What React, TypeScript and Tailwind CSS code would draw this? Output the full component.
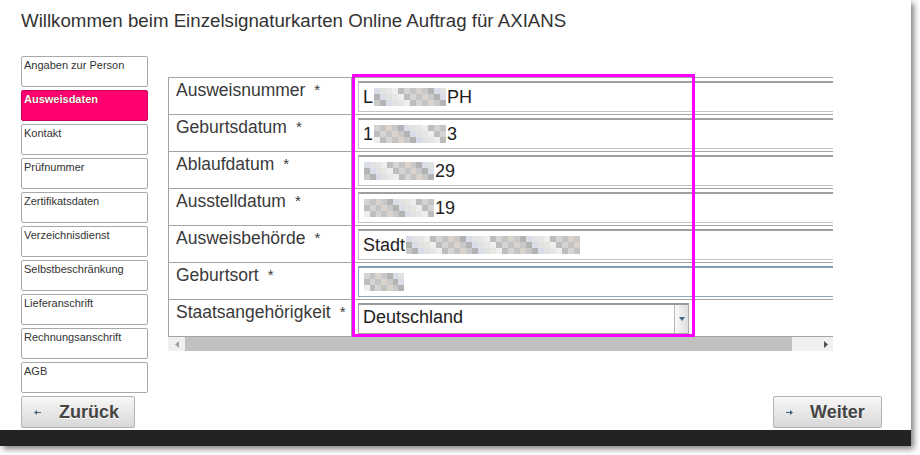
import React from 'react'

const FONT = { fontFamily: '"Liberation Sans", Arial, sans-serif' }

const NAV = [
  'Angaben zur Person', 'Ausweisdaten', 'Kontakt', 'Prüfnummer', 'Zertifikatsdaten',
  'Verzeichnisdienst', 'Selbstbeschränkung', 'Lieferanschrift', 'Rechnungsanschrift', 'AGB'
]

const GRAYS = ['#d4d4d4', '#c9c9c9', '#e2e2e2', '#bdbdbd', '#dad3cb', '#d9dde8', '#eeeeee', '#c4c4c4', '#b3b3b3', '#e8e6e3']

// verpixelter Bereich (geschwärzte Daten im Original)
function Pix({ w, seed = 1 }: { w: number; seed?: number }) {
  const cols = Math.round(w / 6)
  return (
    <span className="inline-flex align-middle mx-[1px]" style={{ width: w }}>
      {Array.from({ length: cols }).map((_, c) => (
        <span key={c} className="flex flex-col w-[6px]">
          {[0, 1, 2].map(r => (
            <span key={r} className="h-[6px]" style={{ background: GRAYS[(c * 7 + r * 3 + seed * 5) % GRAYS.length] }} />
          ))}
        </span>
      ))}
    </span>
  )
}

const ROWS: { label: string; value: React.ReactNode; focus?: boolean; select?: boolean }[] = [
  { label: 'Ausweisnummer', value: <>L<Pix w={72} seed={1} />PH</> },
  { label: 'Geburtsdatum', value: <>1<Pix w={72} seed={2} />3</> },
  { label: 'Ablaufdatum', value: <><Pix w={70} seed={3} />29</> },
  { label: 'Ausstelldatum', value: <><Pix w={70} seed={4} />19</> },
  { label: 'Ausweisbehörde', value: <>Stadt <Pix w={174} seed={5} /></> },
  { label: 'Geburtsort', value: <><Pix w={40} seed={6} /></>, focus: true },
  { label: 'Staatsangehörigkeit', value: 'Deutschland', select: true },
]

function Arrow({ dir }: { dir: 'l' | 'r' }) {
  return (
    <svg width="7" height="5" viewBox="0 0 7 5" className="shrink-0">
      {dir === 'l'
        ? <path d="M0 2.5 L3 0 V2 H7 V3 H3 V5 Z" fill="#4a6b80" />
        : <path d="M7 2.5 L4 0 V2 H0 V3 H4 V5 Z" fill="#36607a" />}
    </svg>
  )
}

export default function App() {
  return (
    <div className="w-[920px] h-[455px] bg-white overflow-hidden" style={FONT}>
      <div className="w-[911px] h-[446px] bg-white flex flex-col shadow-[3px_3px_6px_rgba(0,0,0,0.5)]">
        <div className="h-[56px] pl-[21px] pt-[10px] text-[18.7px] leading-[22px] text-[#333] whitespace-nowrap">
          Willkommen beim Einzelsignaturkarten Online Auftrag für AXIANS
        </div>

        <div className="flex">
          <div className="ml-[21px] w-[127px] flex flex-col gap-[3px]">
            {NAV.map(n => (
              <div key={n}
                className={`h-[31px] rounded-[2px] border text-[11px] leading-[14px] px-[2px] pt-[1px] ${n === 'Ausweisdaten' ? 'bg-[#ff0070] border-[#c8005a] text-white font-bold [text-shadow:0_0_1px_#600]' : 'border-[#a8a8a8] text-[#333]'}`}>
                {n}
              </div>
            ))}
          </div>

          <div className="ml-[20px] mt-[21px] w-[665px] relative self-start">
            <div className="overflow-hidden border-l border-t border-[#a3a3a3]">
              <div className="w-[760px]">
                {ROWS.map(r => (
                  <div key={r.label} className="flex h-[37px] border-b border-[#a3a3a3]">
                    <div className="w-[183px] shrink-0 border-r border-[#a3a3a3] pl-[7px] pt-[1px] text-[17.5px] leading-[22px] text-[#3a3a3a] whitespace-nowrap">
                      {r.label}<span className="ml-[9px] text-[15px] align-top">*</span>
                    </div>
                    <div className="pl-[6px] pt-[3px]">
                      {r.select ? (
                        <div className="w-[331px] h-[31px] flex border border-[#a8a8a8] border-t-2 border-t-[#9a9a9a] bg-white">
                          <div className="flex-1 pl-[4px] text-[18px] leading-[25px] text-[#222] whitespace-nowrap">{r.value}</div>
                          <div className="w-[14px] border-l border-[#b5b5b5] bg-gradient-to-r from-[#fafafa] to-[#dedede] flex items-center justify-center">
                            <svg width="6" height="4" viewBox="0 0 6 4"><path d="M0 0 H6 L3 4 Z" fill="#3f6a86" /></svg>
                          </div>
                        </div>
                      ) : (
                        <div className={`w-[540px] h-[31px] bg-white border border-t-2 pl-[4px] text-[18px] leading-[28px] text-[#222] whitespace-nowrap flex items-center ${r.focus ? 'border-[#8aa6bf] border-t-[#7f9db9]' : 'border-[#c4c4c4] border-t-[#9f9f9f]'}`}>
                          {r.value}
                        </div>
                      )}
                    </div>
                  </div>
                ))}
              </div>
            </div>

            <div className="h-[14px] flex bg-[#f0f0f0]">
              <div className="w-[17px] flex items-center justify-center">
                <svg width="4" height="7" viewBox="0 0 4 7"><path d="M4 0 V7 L0 3.5 Z" fill="#a0a0a0" /></svg>
              </div>
              <div className="w-[607px] bg-[#c1c1c1]" />
              <div className="flex-1 flex items-center justify-end pr-[5px]">
                <svg width="4" height="7" viewBox="0 0 4 7"><path d="M0 0 V7 L4 3.5 Z" fill="#505050" /></svg>
              </div>
            </div>

            <div className="absolute left-[184px] top-[-3px] w-[343px] h-[263px] border-[3px] border-[#ff00ff] pointer-events-none" />
          </div>
        </div>

        <div className="flex justify-between mt-[3px] pl-[21px] pr-[29px]">
          <button className="w-[114px] h-[32px] rounded-[2px] border border-[#b3b3b3] bg-gradient-to-b from-[#f7f7f7] to-[#d8d8d8] flex items-center pl-[12px] gap-[18px] text-[18px] font-bold text-[#444] [text-shadow:0_1px_0_#fff]">
            <Arrow dir="l" />Zurück
          </button>
          <button className="w-[109px] h-[32px] rounded-[2px] border border-[#b3b3b3] bg-gradient-to-b from-[#f7f7f7] to-[#d8d8d8] flex items-center pl-[12px] gap-[17px] text-[18px] font-bold text-[#444] [text-shadow:0_1px_0_#fff]">
            <Arrow dir="r" />Weiter
          </button>
        </div>

        <div className="mt-auto h-[16px] bg-[#232323]" />
      </div>
    </div>
  )
}
